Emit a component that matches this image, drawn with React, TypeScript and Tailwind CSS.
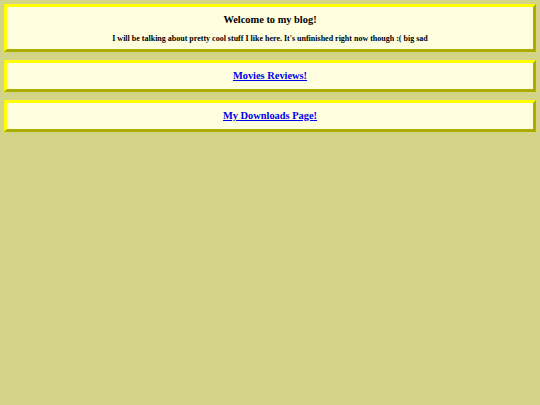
import React from 'react';

const Box = ({ children, className = '' }: { children: React.ReactNode; className?: string }) => (
  <div className={`bg-[#ffffe0] border-[3px] [border-style:outset] border-[#ffff00] text-center leading-[14px] text-[10.4px] ${className}`}>
    {children}
  </div>
);

export default function App() {
  return (
    <div className="min-h-[405px] bg-[#d4d488] p-[4px] flex flex-col gap-[8px] font-['Liberation_Serif',serif] text-black">
      <Box className="pt-[6px] pb-[5px]">
        <h2 className="text-[10.4px] font-bold leading-[13px]">Welcome to my blog!</h2>
        <p className="text-[8px] font-bold leading-[10px] mt-[8px]">
          I will be talking about pretty cool stuff I like here. It's unfinished right now though :( big sad
        </p>
      </Box>
      <Box className="py-[6px]">
        <a href="#" className="font-bold text-[#0000ee] underline">Movies Reviews!</a>
      </Box>
      <Box className="py-[6px]">
        <a href="#" className="font-bold text-[#0000ee] underline">My Downloads Page!</a>
      </Box>
    </div>
  );
}
